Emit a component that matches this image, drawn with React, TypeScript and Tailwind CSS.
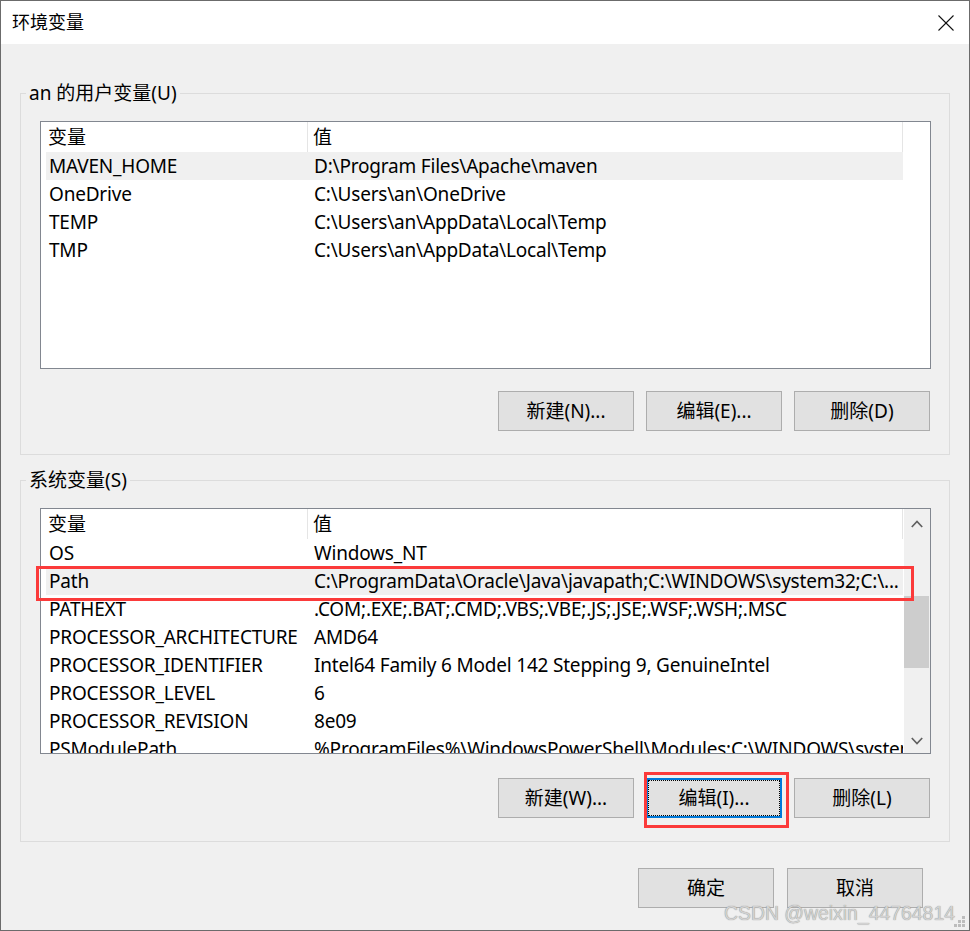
import React from 'react';

const userVars = [
    { name: 'MAVEN_HOME', value: 'D:\\Program Files\\Apache\\maven', selected: true },
    { name: 'OneDrive', value: 'C:\\Users\\an\\OneDrive' },
    { name: 'TEMP', value: 'C:\\Users\\an\\AppData\\Local\\Temp' },
    { name: 'TMP', value: 'C:\\Users\\an\\AppData\\Local\\Temp' },
];

const systemVars = [
    { name: 'OS', value: 'Windows_NT' },
    { name: 'Path', value: 'C:\\ProgramData\\Oracle\\Java\\javapath;C:\\WINDOWS\\system32;C:\\...', selected: true },
    { name: 'PATHEXT', value: '.COM;.EXE;.BAT;.CMD;.VBS;.VBE;.JS;.JSE;.WSF;.WSH;.MSC' },
    { name: 'PROCESSOR_ARCHITECTURE', value: 'AMD64' },
    { name: 'PROCESSOR_IDENTIFIER', value: 'Intel64 Family 6 Model 142 Stepping 9, GenuineIntel' },
    { name: 'PROCESSOR_LEVEL', value: '6' },
    { name: 'PROCESSOR_REVISION', value: '8e09' },
    { name: 'PSModulePath', value: '%ProgramFiles%\\WindowsPowerShell\\Modules;C:\\WINDOWS\\system32\\WindowsPowerShell' },
];

type Row = { name: string; value: string; selected?: boolean };

const Chevron = ({ down = false }: { down?: boolean }) => (
    <svg width="12" height="8" viewBox="0 0 12 8" fill="none" stroke="#606060" strokeWidth={1.7}>
        {down ? <polyline points="0.8,1 6,6.5 11.2,1" /> : <polyline points="0.8,7 6,1.5 11.2,7" />}
    </svg>
);

const ListHeader = () => (
    <div className="flex h-[30px] shrink-0">
        <div className="w-[267px] pl-[7px] flex items-center border-r border-[#e5e5e5]">变量</div>
        <div className="w-[595px] pl-[5px] flex items-center border-r border-[#e5e5e5]">值</div>
    </div>
);

const ListRows = ({ rows }: { rows: Row[] }) => (
    <>
        {rows.map((r) => (
            <div
                key={r.name}
                className={`flex ml-[5px] w-[857px] h-[28px] shrink-0 items-center whitespace-nowrap tracking-[-0.2px] ${r.selected ? 'bg-[#f0f0f0]' : ''}`}
            >
                <div className="w-[262px] pl-[3px] shrink-0">{r.name}</div>
                <div className="flex-1 pl-[6px] overflow-hidden">{r.value}</div>
            </div>
        ))}
    </>
);

const Button = ({ label, focused = false }: { label: string; focused?: boolean }) => (
    <button
        className={`w-[136px] h-[40px] bg-[#e1e1e1] flex items-center justify-center ${
            focused
                ? 'border-2 border-[#0078d7] outline-1 outline-dotted outline-black outline-offset-[-3px]'
                : 'border border-[#adadad]'
        }`}
    >
        {label}
    </button>
);

export default function App() {
    return (
        <div className="relative w-[970px] h-[931px] border border-[#6b6b6b] bg-[#f0f0f0] flex flex-col text-[19px] text-black font-['Noto_Sans','Noto_Sans_CJK_SC',sans-serif] overflow-hidden">
            {/* Title bar */}
            <div className="h-[43px] shrink-0 bg-white flex items-center justify-between pl-[11px] pr-[15px]">
                <span className="text-[18px]">环境变量</span>
                <svg width="16" height="16" viewBox="0 0 16 16" stroke="#111" strokeWidth={1.1}>
                    <line x1="0.5" y1="0.5" x2="15.5" y2="15.5" />
                    <line x1="15.5" y1="0.5" x2="0.5" y2="15.5" />
                </svg>
            </div>

            {/* Body */}
            <div className="flex-1 flex flex-col px-[19px]">
                <fieldset className="mt-[37px] border border-[#dcdcdc] p-0">
                    <legend className="ml-[5px] px-[3px] leading-[24px]">an 的用户变量(U)</legend>
                    <div className="pt-[16px] pl-[19px] pr-[18px] pb-[23px] flex flex-col">
                        <div className="h-[248px] bg-white border border-[#828790] flex flex-col overflow-hidden">
                            <ListHeader />
                            <ListRows rows={userVars} />
                        </div>
                        <div className="mt-[22px] flex justify-end gap-[12px] pr-[1px]">
                            <Button label="新建(N)..." />
                            <Button label="编辑(E)..." />
                            <Button label="删除(D)" />
                        </div>
                    </div>
                </fieldset>

                <fieldset className="mt-[13px] border border-[#dcdcdc] p-0">
                    <legend className="ml-[5px] px-[3px] leading-[24px]">系统变量(S)</legend>
                    <div className="pt-[16px] pl-[19px] pr-[18px] pb-[23px] flex flex-col">
                        <div className="h-[246px] bg-white border border-[#828790] flex overflow-hidden">
                            <div className="flex-1 flex flex-col overflow-hidden">
                                <ListHeader />
                                <ListRows rows={systemVars} />
                            </div>
                            <div className="w-[26px] shrink-0 bg-[#f0f0f0] flex flex-col">
                                <div className="h-[30px] flex items-center justify-center">
                                    <Chevron />
                                </div>
                                <div className="mt-[57px] h-[72px] w-[25px] bg-[#cdcdcd]" />
                                <div className="flex-1" />
                                <div className="h-[24px] flex items-center justify-center">
                                    <Chevron down />
                                </div>
                            </div>
                        </div>
                        <div className="mt-[24px] flex justify-end gap-[12px] pr-[1px]">
                            <Button label="新建(W)..." />
                            <Button label="编辑(I)..." focused />
                            <Button label="删除(L)" />
                        </div>
                    </div>
                </fieldset>

                <div className="mt-[26px] flex justify-end gap-[13px] pr-[27px]">
                    <Button label="确定" />
                    <Button label="取消" />
                </div>
            </div>

            {/* Red annotation boxes */}
            <div className="absolute left-[35px] top-[565px] w-[878px] h-[35px] border-[3px] border-[#fb3a3a]" />
            <div className="absolute left-[643px] top-[771px] w-[145px] h-[56px] border-[3px] border-[#fb3a3a]" />

            {/* Watermark */}
            <div className="absolute left-[723px] top-[899px] leading-[26px] text-[19.4px] text-[#d2d2d2] font-['Liberation_Sans',sans-serif] [text-shadow:0_0_1px_#7a7a7a]">
                CSDN @weixin_44764814
            </div>

            {/* Resize grip */}
            <svg className="absolute left-[953px] top-[915px]" width="12" height="12" viewBox="0 0 12 12" fill="#bdbdbd">
                <rect x="8" y="0" width="3" height="3" />
                <rect x="4" y="4" width="3" height="3" />
                <rect x="8" y="4" width="3" height="3" />
                <rect x="0" y="8" width="3" height="3" />
                <rect x="4" y="8" width="3" height="3" />
                <rect x="8" y="8" width="3" height="3" />
            </svg>
        </div>
    );
}
